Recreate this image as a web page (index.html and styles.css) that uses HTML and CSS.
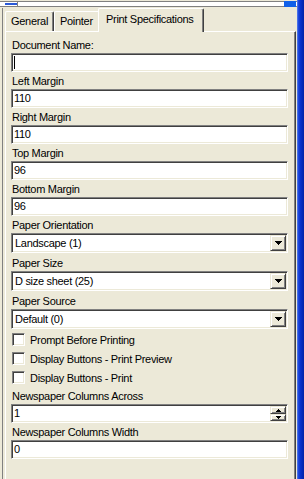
FILE: index.html
```html
<!DOCTYPE html>
<html>
<head>
<meta charset="utf-8">
<link rel="stylesheet" href="styles.css">
</head>
<body>
<div class="screen">
  <div class="content">
    <div class="strip">
      <div class="strip-track">
        <span class="strip-thumb"></span>
        <span class="strip-tick"></span>
        <span class="strip-space"></span>
        <span class="strip-fill"></span>
      </div>
    </div>
    <div class="pane">
      <div class="tabs">
        <div class="tab tab-general">General</div>
        <div class="tab tab-pointer">Pointer</div>
        <div class="tab tab-active">Print Specifications</div>
      </div>
      <div class="panel">
        <div class="label">Document Name:</div>
        <div class="field"><span class="caret"></span></div>
        <div class="label">Left Margin</div>
        <div class="field">110</div>
        <div class="label">Right Margin</div>
        <div class="field">110</div>
        <div class="label">Top Margin</div>
        <div class="field">96</div>
        <div class="label">Bottom Margin</div>
        <div class="field">96</div>

        <div class="label">Paper Orientation</div>
        <div class="select">
          <span class="select-text">Landscape (1)</span>
          <span class="btn btn-drop"><svg width="7" height="4" viewBox="0 0 7 4" shape-rendering="crispEdges"><rect x="0" y="0" width="7" height="1"/><rect x="1" y="1" width="5" height="1"/><rect x="2" y="2" width="3" height="1"/><rect x="3" y="3" width="1" height="1"/></svg></span>
        </div>
        <div class="label">Paper Size</div>
        <div class="select">
          <span class="select-text">D size sheet (25)</span>
          <span class="btn btn-drop"><svg width="7" height="4" viewBox="0 0 7 4" shape-rendering="crispEdges"><rect x="0" y="0" width="7" height="1"/><rect x="1" y="1" width="5" height="1"/><rect x="2" y="2" width="3" height="1"/><rect x="3" y="3" width="1" height="1"/></svg></span>
        </div>
        <div class="label">Paper Source</div>
        <div class="select">
          <span class="select-text">Default (0)</span>
          <span class="btn btn-drop"><svg width="7" height="4" viewBox="0 0 7 4" shape-rendering="crispEdges"><rect x="0" y="0" width="7" height="1"/><rect x="1" y="1" width="5" height="1"/><rect x="2" y="2" width="3" height="1"/><rect x="3" y="3" width="1" height="1"/></svg></span>
        </div>

        <div class="check"><span class="box"></span><span>Prompt Before Printing</span></div>
        <div class="check"><span class="box"></span><span>Display Buttons - Print Preview</span></div>
        <div class="check"><span class="box"></span><span>Display Buttons - Print</span></div>

        <div class="label">Newspaper Columns Across</div>
        <div class="spin">
          <span class="spin-text">1</span>
          <span class="spin-btns">
            <span class="btn btn-up"><svg width="5" height="3" viewBox="0 0 5 3" shape-rendering="crispEdges"><rect x="2" y="0" width="1" height="1"/><rect x="1" y="1" width="3" height="1"/><rect x="0" y="2" width="5" height="1"/></svg></span>
            <span class="btn btn-down"><svg width="5" height="3" viewBox="0 0 5 3" shape-rendering="crispEdges"><rect x="0" y="0" width="5" height="1"/><rect x="1" y="1" width="3" height="1"/><rect x="2" y="2" width="1" height="1"/></svg></span>
          </span>
        </div>
        <div class="label">Newspaper Columns Width</div>
        <div class="field">0</div>
      </div>
    </div>
  </div>
  <div class="bluebar"></div>
</div>
</body>
</html>
```

FILE: styles.css
```css
* { box-sizing: border-box; }
html, body { margin: 0; padding: 0; }
body {
  width: 304px;
  height: 479px;
  overflow: hidden;
  background: #ECE9D8;
  font-family: "Liberation Sans", Arial, sans-serif;
  font-size: 11px;
  letter-spacing: -0.3px;
  color: #000;
}
.screen { display: flex; width: 304px; height: 479px; overflow: hidden; }
.content { width: 297px; display: flex; flex-direction: column; }
.bluebar {
  width: 7px;
  background: linear-gradient(to right, #6b8ff0 0, #2550e0 1px, #0a33d0 3px, #0022a8 7px);
}

/* top strip */
.strip { height: 8px; padding-top: 1px; flex: none; }
.strip-track {
  height: 6px;
  display: flex;
  align-items: center;
  background: #fff;
  border-top: 1px solid #808080;
  border-bottom: 1px solid #808080;
}
.strip-thumb { width: 12px; height: 2px; margin-left: 5px; background: #2a5ad8; }
.strip-tick { width: 1px; align-self: stretch; margin: -1px 0; background: #808080; }
.strip-space { flex: 1; }
.strip-fill { width: 12px; align-self: stretch; margin: -1px 1px -1px 0; background: #1060e8; }

/* pane with tabs */
.pane {
  flex: 1;
  margin-left: 2px;
  border-left: 1px solid #808080;
  padding: 0 1px 0 2px;
  display: flex;
  flex-direction: column;
}
.tabs { height: 23px; display: flex; align-items: flex-end; flex: none; }
.tab {
  height: 20px;
  line-height: 19px;
  padding-left: 5px;
  border-top: 1px solid #fff;
  border-left: 1px solid #fff;
  border-radius: 2px 2px 0 0;
  white-space: nowrap;
  background: #ECE9D8;
}
.tab-general { width: 49px; border-right: 1px solid #404040; box-shadow: inset -1px 0 #808080; }
.tab-pointer { width: 44px; border-radius: 2px 0 0 0; }
.tab-active {
  position: relative;
  z-index: 1;
  width: 106px;
  height: 24px;
  margin-bottom: -1px;
  padding-left: 7px;
  line-height: 21px;
  border-right: 1px solid #404040;
  box-shadow: inset -1px 0 #808080;
}

.panel {
  flex: 1;
  border-top: 1px solid #fff;
  border-left: 1px solid #fff;
  border-right: 1px solid #404040;
  box-shadow: inset -1px 0 #808080;
  padding: 4px 0 0 5px;
}

.label { height: 17px; line-height: 18px; padding-left: 1px; white-space: nowrap; }

.field, .select, .spin {
  width: 277px;
  background: #fff;
  border-style: solid;
  border-width: 1px;
  border-color: #808080 #fff #fff #808080;
  box-shadow: inset 1px 1px #404040, inset -1px -1px #ECE9D8;
}
.field { height: 19px; padding-left: 2px; line-height: 17px; }
.caret { display: block; width: 1px; height: 13px; margin-top: 2px; background: #000; }

.select { height: 20px; margin-bottom: 1px; padding: 1px; display: flex; }
.select-text { flex: 1; padding-left: 2px; line-height: 16px; }

.btn {
  display: flex;
  align-items: center;
  justify-content: center;
  background: #ECE9D8;
  border: 1px solid;
  border-color: #ECE9D8 #404040 #404040 #ECE9D8;
  box-shadow: inset 1px 1px #fff, inset -1px -1px #808080;
}
.btn svg { display: block; fill: #000; }
.btn-drop { width: 16px; height: 16px; }

.spin { height: 19px; padding: 1px; display: flex; }
.spin-text { flex: 1; padding-left: 1px; line-height: 15px; }
.spin-btns { width: 16px; display: flex; flex-direction: column; }
.btn-up { height: 8px; }
.btn-down { height: 7px; }

.check { height: 19px; display: flex; align-items: center; gap: 5px; padding-left: 1px; white-space: nowrap; }
.box {
  width: 13px;
  height: 13px;
  background: #fff;
  border-style: solid;
  border-width: 1px;
  border-color: #808080 #fff #fff #808080;
  box-shadow: inset 1px 1px #404040, inset -1px -1px #ECE9D8;
}
```
